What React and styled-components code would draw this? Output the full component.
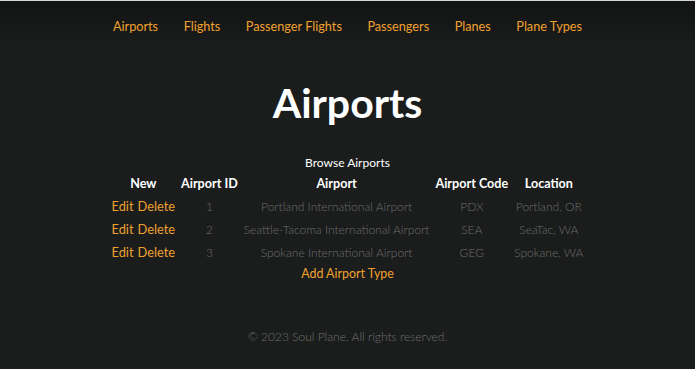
import React from "react";
import styled, { createGlobalStyle } from "styled-components";

const GlobalStyle = createGlobalStyle`
  html, body {
    margin: 0;
    padding: 0;
    background: #1b1d1d;
    font-family: Lato, "Noto Sans", sans-serif;
  }
  #root {
    min-height: 369px;
  }
`;

const Page = styled.div`
  min-height: 369px;
  border-top: 1px solid #d8d8d8;
  background: #1b1d1d;
  display: flex;
  flex-direction: column;
`;

const Header = styled.header`
  background: linear-gradient(#121414, #1b1d1d);
  height: 50px;
  display: flex;
  justify-content: center;
  align-items: center;
  padding-bottom: 1px;
  box-sizing: border-box;
`;

const Nav = styled.nav`
  display: flex;
  gap: 25.5px;
`;

const NavLink = styled.a`
  color: #f0a12e;
  font-size: 12.7px;
  text-decoration: none;
`;

const Main = styled.main`
  display: flex;
  flex-direction: column;
  align-items: center;
`;

const Title = styled.h1`
  margin: 29px 0 0;
  color: #ffffff;
  font-size: 41px;
  font-weight: 700;
  line-height: 46px;
`;

const Table = styled.table`
  margin-top: 28px;
  border-collapse: separate;
  border-spacing: 2px 0;
  font-size: 12px;
`;

const Caption = styled.caption`
  color: #ffffff;
  font-size: 12px;
  line-height: 18px;
  padding-bottom: 1px;
`;

const Th = styled.th`
  color: #ffffff;
  font-weight: 700;
  font-size: 12.6px;
  line-height: 22px;
  padding: 0 2px;
`;

const Td = styled.td`
  color: #6c6c6c;
  font-weight: 300;
  text-align: center;
  line-height: 23px;
  padding: 0 2px;
`;

const Action = styled.a`
  color: #f0a12e;
  font-weight: 400;
  font-size: 12.8px;
  text-decoration: none;
  & + & {
    margin-left: 4px;
  }
`;

const AddLink = styled.a`
  color: #f0a12e;
  font-size: 12.4px;
  text-decoration: none;
  margin-top: 2px;
`;

const Footer = styled.footer`
  margin-top: 48px;
  text-align: center;
  color: #6f6f6f;
  font-size: 12px;
  font-weight: 300;
`;

const navItems = ["Airports", "Flights", "Passenger Flights", "Passengers", "Planes", "Plane Types"];

const airports = [
  { id: 1, name: "Portland International Airport", code: "PDX", location: "Portland, OR" },
  { id: 2, name: "Seattle-Tacoma International Airport", code: "SEA", location: "SeaTac, WA" },
  { id: 3, name: "Spokane International Airport", code: "GEG", location: "Spokane, WA" },
];

export default function App() {
  return (
    <Page>
      <GlobalStyle />
      <Header>
        <Nav>
          {navItems.map((item) => (
            <NavLink key={item} href="#">
              {item}
            </NavLink>
          ))}
        </Nav>
      </Header>
      <Main>
        <Title>Airports</Title>
        <Table>
          <Caption>Browse Airports</Caption>
          <thead>
            <tr>
              <Th>New</Th>
              <Th>Airport ID</Th>
              <Th>Airport</Th>
              <Th>Airport Code</Th>
              <Th>Location</Th>
            </tr>
          </thead>
          <tbody>
            {airports.map((a) => (
              <tr key={a.id}>
                <Td>
                  <Action href="#">Edit</Action>
                  <Action href="#">Delete</Action>
                </Td>
                <Td>{a.id}</Td>
                <Td>{a.name}</Td>
                <Td>{a.code}</Td>
                <Td>{a.location}</Td>
              </tr>
            ))}
          </tbody>
        </Table>
        <AddLink href="#">Add Airport Type</AddLink>
      </Main>
      <Footer>© 2023 Soul Plane. All rights reserved.</Footer>
    </Page>
  );
}
